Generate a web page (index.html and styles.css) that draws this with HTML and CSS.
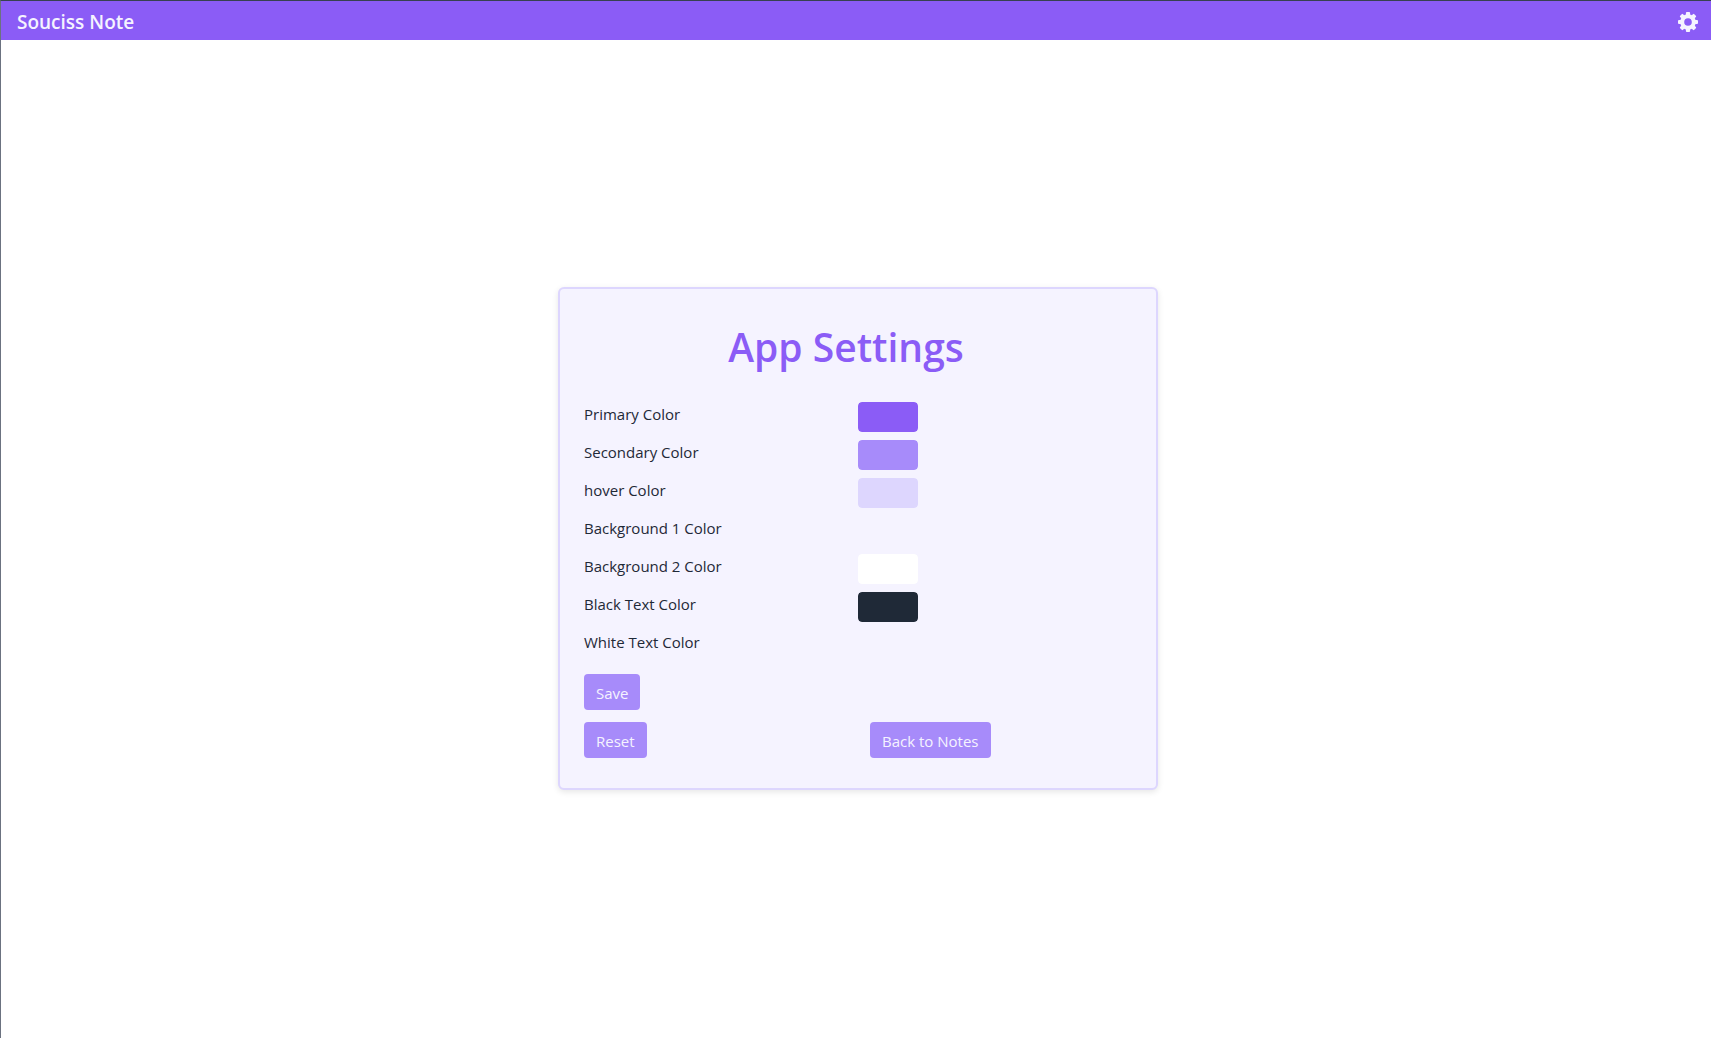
FILE: index.html
```html
<!DOCTYPE html>
<html lang="en">
<head>
  <meta charset="UTF-8" />
  <title>Souciss Note</title>
  <meta name="viewport" content="width=device-width, initial-scale=1.0" />
  <link rel="stylesheet" href="styles.css">
</head>
<body>
  <header class="navbar">
    <a class="brand" href="#">Souciss Note</a>
    <a class="settings-link" href="#settings" aria-label="Settings">
      <svg viewBox="-12 -12 24 24" width="24" height="24" fill="currentColor" aria-hidden="true">
        <circle r="5.8" fill="none" stroke="currentColor" stroke-width="4" />
        <g id="teeth">
          <rect x="-2.1" y="-10" width="4.2" height="4.5" rx="1" />
          <rect x="-2.1" y="5.5" width="4.2" height="4.5" rx="1" />
          <rect x="-10" y="-2.1" width="4.5" height="4.2" rx="1" />
          <rect x="5.5" y="-2.1" width="4.5" height="4.2" rx="1" />
        </g>
        <use href="#teeth" transform="rotate(45)" />
      </svg>
    </a>
  </header>

  <main class="page">
    <section class="card" id="settings">
      <h1>App Settings</h1>
      <form class="settings-form">
        <div class="row">
          <label for="primary">Primary Color</label>
          <input type="color" id="primary" value="#8b5cf6" />
        </div>
        <div class="row">
          <label for="secondary">Secondary Color</label>
          <input type="color" id="secondary" value="#a78bfa" />
        </div>
        <div class="row">
          <label for="hover">hover Color</label>
          <input type="color" id="hover" value="#ddd6fe" />
        </div>
        <div class="row">
          <label for="bg1">Background 1 Color</label>
          <input type="color" id="bg1" value="#f5f3ff" />
        </div>
        <div class="row">
          <label for="bg2">Background 2 Color</label>
          <input type="color" id="bg2" value="#ffffff" />
        </div>
        <div class="row">
          <label for="blackText">Black Text Color</label>
          <input type="color" id="blackText" value="#1f2937" />
        </div>
        <div class="row">
          <label for="whiteText">White Text Color</label>
          <input type="color" id="whiteText" value="#f5f3ff" />
        </div>
        <button class="btn" type="submit">Save</button>
      </form>
      <div class="actions">
        <div><button class="btn" type="button">Reset</button></div>
        <div><button class="btn" type="button">Back to Notes</button></div>
      </div>
    </section>
  </main>
</body>
</html>
```
FILE: styles.css
```css
* {
  margin: 0;
  padding: 0;
  box-sizing: border-box;
}
body {
  display: flex;
  flex-direction: column;
  min-height: 100vh;
  background: #ffffff;
  color: #1f2937;
  font-family: "Segoe UI", "Open Sans", sans-serif;
  font-size: 15px;
  line-height: 24px;
  border-top: 1px solid #374151;
  border-left: 1px solid #6b7280;
}
.navbar {
  display: flex;
  justify-content: space-between;
  align-items: center;
  height: 39px;
  padding: 2px 11px 0 16px;
  background: #8b5cf6;
}
.brand {
  color: #f5f3ff;
  font-size: 19px;
  font-weight: 600;
  text-decoration: none;
}
.settings-link {
  display: flex;
  color: #f5f3ff;
}
.page {
  flex: 1;
  display: flex;
  justify-content: center;
  align-items: center;
  padding: 0 0 2px 4px;
}
.card {
  width: 100%;
  max-width: 600px;
  padding: 32px 24px 30px;
  background: #f5f3ff;
  border: 2px solid #ddd6fe;
  border-radius: 6px;
  box-shadow: 0 2px 6px rgba(0, 0, 0, 0.1);
}
h1 {
  padding-right: 24px;
  margin-bottom: 29px;
  color: #8b5cf6;
  font-size: 39px;
  font-weight: 600;
  line-height: 52px;
  text-align: center;
}
.row {
  display: grid;
  grid-template-columns: 1fr 1fr;
  margin-bottom: 8px;
}
input[type="color"] {
  width: 60px;
  height: 30px;
  border: none;
  border-radius: 4px;
  background: none;
  overflow: hidden;
  cursor: pointer;
}
input[type="color"]::-webkit-color-swatch-wrapper {
  padding: 0;
}
input[type="color"]::-webkit-color-swatch {
  border: none;
  border-radius: 4px;
}
.btn {
  height: 36px;
  padding: 2px 12px 0;
  background: #a78bfa;
  color: #f5f3ff;
  border: none;
  border-radius: 4px;
  font: inherit;
  cursor: pointer;
}
.btn:hover {
  background: #ddd6fe;
}
.settings-form .btn {
  margin: 6px 0 12px;
}
.actions {
  display: grid;
  grid-template-columns: 1fr 1fr;
  column-gap: 24px;
}
```
